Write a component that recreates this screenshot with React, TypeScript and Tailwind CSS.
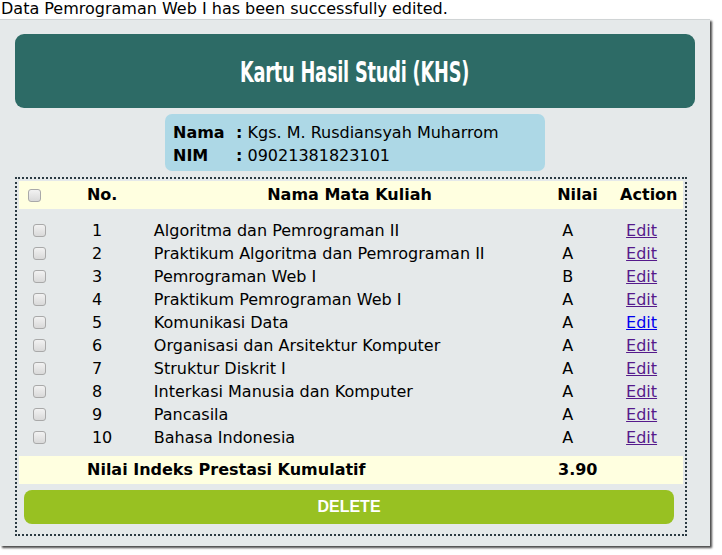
import React from "react";

const rows: [number, string, string, boolean][] = [
  [1, "Algoritma dan Pemrograman II", "A", false],
  [2, "Praktikum Algoritma dan Pemrograman II", "A", false],
  [3, "Pemrograman Web I", "B", false],
  [4, "Praktikum Pemrograman Web I", "A", false],
  [5, "Komunikasi Data", "A", true],
  [6, "Organisasi dan Arsitektur Komputer", "A", false],
  [7, "Struktur Diskrit I", "A", false],
  [8, "Interkasi Manusia dan Komputer", "A", false],
  [9, "Pancasila", "A", false],
  [10, "Bahasa Indonesia", "A", false],
];

function Box() {
  return (
    <span className="block w-[13px] h-[13px] rounded-[3px] border border-[#a9a9a9] bg-gradient-to-b from-[#f2f2f2] to-[#d9d9d9]" />
  );
}

export default function App() {
  return (
    <div className="bg-white w-[722px] h-[555px] text-black" style={{ fontFamily: "'DejaVu Sans', sans-serif" }}>
      <div className="text-[16px] leading-[18px] h-[19px] pl-[1px]">Data Pemrograman Web I has been successfully edited.</div>
      <div className="w-[710px] bg-[#e5e9ea] border-t border-[#d0d4d5] shadow-[2px_2px_2px_#4a4a4a] px-[15px] pt-[14px] pb-[10px]">
        <div className="h-[74px] rounded-[9px] bg-[#2d6b66] flex items-center justify-center">
          <span className="inline-block text-white text-[29px] leading-[30px] font-bold scale-x-[0.68] tracking-[-0.3px] mt-[2px]" style={{ fontFamily: "'DejaVu Sans Condensed', 'DejaVu Sans', sans-serif" }}>
            Kartu Hasil Studi (KHS)
          </span>
        </div>
        <div className="mx-auto mt-[6px] w-[380px] h-[57px] rounded-[7px] bg-[#add8e6] pl-[8px] pt-[7px] text-[16px] leading-[23px]">
          <div className="flex"><span className="font-bold w-[63px]">Nama</span><span><b>:</b> Kgs. M. Rusdiansyah Muharrom</span></div>
          <div className="flex"><span className="font-bold w-[63px]">NIM</span><span><b>:</b> 09021381823101</span></div>
        </div>
        <div className="mt-[6px] w-[672px] border-2 border-dotted border-[#2b3a42] p-[2px] text-[16px]">
          <div className="flex h-[28px] items-center bg-[#ffffe0] font-bold">
            <div className="w-[61px] pl-[9px]"><Box /></div>
            <div className="w-[70px] pl-[7px]">No.</div>
            <div className="w-[400px] text-center">Nama Mata Kuliah</div>
            <div className="w-[62px] pl-[8px]">Nilai</div>
            <div className="w-[72px] pl-[9px]">Action</div>
          </div>
          <div className="pt-[10px] pb-[7px]">
            {rows.map(([n, name, g, blue]) => (
              <div key={n} className="flex h-[23px] items-center">
                <div className="w-[61px] pl-[14px]"><Box /></div>
                <div className="w-[70px] pl-[12px]">{n}</div>
                <div className="w-[400px] pl-[4px]">{name}</div>
                <div className="w-[62px] pl-[13px]">{g}</div>
                <div className="w-[72px] pl-[15px]">
                  <a href="#" className={"underline " + (blue ? "text-[#0000ee]" : "text-[#551a8b]")}>Edit</a>
                </div>
              </div>
            ))}
          </div>
          <div className="flex h-[28px] items-center bg-[#ffffe0] font-bold">
            <div className="w-[61px]" />
            <div className="w-[470px] pl-[7px]">Nilai Indeks Prestasi Kumulatif</div>
            <div className="w-[62px] pl-[8px]">3.90</div>
          </div>
          <div className="mt-[6px] ml-[5px] mr-[9px] h-[34px] rounded-[8px] bg-[#98c122] flex items-center justify-center text-white font-bold text-[16px]" style={{ fontFamily: "'Liberation Sans', Arial, sans-serif" }}>
            DELETE
          </div>
          <div className="h-[8px]" />
        </div>
      </div>
    </div>
  );
}
